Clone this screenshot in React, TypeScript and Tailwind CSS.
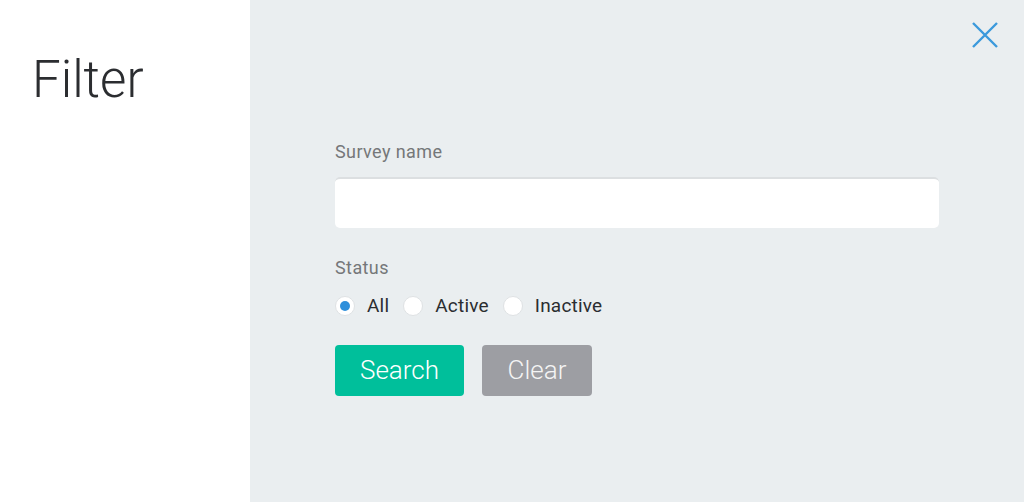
import React, { useState } from 'react';

const font = { fontFamily: 'Roboto, "Liberation Sans", sans-serif' };

export default function App() {
  const [status, setStatus] = useState('all');
  const [name, setName] = useState('');

  const options = [
    { value: 'all', label: 'All' },
    { value: 'active', label: 'Active' },
    { value: 'inactive', label: 'Inactive' },
  ];

  return (
    <div className="flex h-[502px] w-full" style={font}>
      <aside className="w-[250px] shrink-0 bg-white pl-[32px] pt-[48px]">
        <h1 className="text-[51px] font-light leading-[64px] text-[#2b2d30]">Filter</h1>
      </aside>

      <main className="relative flex-1 bg-[#eaeef0] px-[85px] pt-[140px]">
        <button className="absolute right-[26px] top-[22px] text-[#3b99dc]" aria-label="Close">
          <svg width="26" height="26" viewBox="0 0 26 26" fill="none" stroke="currentColor" strokeWidth="2.4">
            <path d="M1 1L25 25M25 1L1 25" />
          </svg>
        </button>

        <label className="block text-[18px] leading-[24px] tracking-[0.4px] text-[#757779]">Survey name</label>
        <input
          value={name}
          onChange={(e) => setName(e.target.value)}
          className="mt-[13px] block h-[51px] w-full rounded-[5px] border-t-2 border-[#dcdfe1] bg-white px-3 text-[18px] outline-none"
        />

        <label className="mt-[28px] block text-[18px] leading-[24px] tracking-[0.4px] text-[#757779]">Status</label>
        <div className="mt-[13px] flex items-center">
          {options.map((o) => (
            <label key={o.value} className="mr-[14px] flex cursor-pointer items-center gap-[12px]">
              <span
                onClick={() => setStatus(o.value)}
                className="flex h-[20px] w-[20px] items-center justify-center rounded-full border border-[#dfe2e4] bg-white"
              >
                {status === o.value ? <span className="h-[10px] w-[10px] rounded-full bg-[#2e8fdb]" /> : null}
              </span>
              <span className="text-[19px] leading-[26px] tracking-[0.2px] text-[#2b2d30]">{o.label}</span>
            </label>
          ))}
        </div>

        <div className="mt-[26px] flex gap-[18px]">
          <button className="h-[51px] w-[129px] rounded-[4px] bg-[#00bf9b] text-[26px] font-light text-white">
            Search
          </button>
          <button
            onClick={() => {
              setName('');
              setStatus('all');
            }}
            className="h-[51px] w-[110px] rounded-[4px] bg-[#9d9ea3] text-[26px] font-light text-[#f4f4f4]"
          >
            Clear
          </button>
        </div>
      </main>
    </div>
  );
}
